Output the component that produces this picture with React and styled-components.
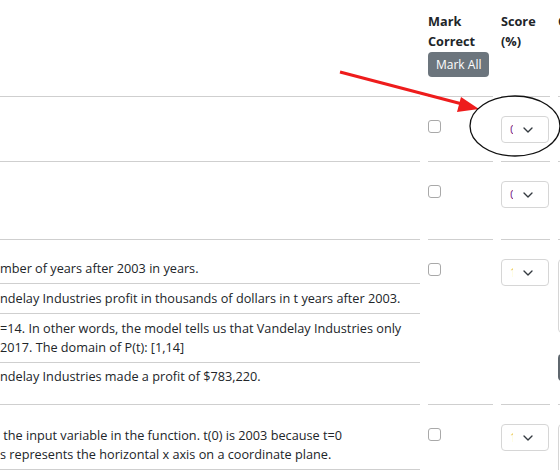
import React from 'react'
import styled, { createGlobalStyle } from 'styled-components'
import { ChevronDown } from 'lucide-react'

const Global = createGlobalStyle`
  html, body {
    margin: 0;
    padding: 0;
    width: 560px;
    height: 470px;
    overflow: hidden;
    background: #fff;
  }
  body {
    font-family: "Open Sans", "Noto Sans", sans-serif;
    font-size: 12.7px;
    color: #212529;
  }
`

const Page = styled.div`
  position: relative;
  width: 760px;
`

const Row = styled.div`
  display: grid;
  grid-template-columns: 420px 65px 49px 200px;
  column-gap: 8px;
`

const Cell = styled.div`
  border-top: ${p => (p.$head ? 'none' : '1px solid #cfcfcf')};
  padding: ${p => (p.$head ? '11px 0 19px' : '19px 0 18px')};
  min-height: ${p => p.$min || 0}px;
  box-sizing: border-box;
`

const HeadText = styled.div`
  font-weight: 700;
  line-height: 20px;
  white-space: nowrap;
`

const MarkAll = styled.button`
  margin-top: 1px;
  height: 25px;
  padding: 0 8px;
  border: none;
  border-radius: 4px;
  background: #6c757d;
  color: #fff;
  font-family: inherit;
  font-size: 12px;
`

const SubList = styled.div`
  margin-top: ${p => p.$offset || 0}px;
`

const SubRow = styled.div`
  padding: ${p => (p.$first ? '0 0 5px' : p.$last ? '4px 0 0' : '5px 0')};
  line-height: 19px;
  border-bottom: ${p => (p.$last ? 'none' : '1px solid #cfcfcf')};
  white-space: pre;
`

const Check = styled.span`
  display: block;
  width: 13px;
  height: 13px;
  margin-top: 4px;
  border: 1px solid #a9a9a9;
  border-radius: 3px;
  box-sizing: border-box;
  background: #fff;
`

const Select = styled.div`
  display: flex;
  align-items: center;
  width: 48px;
  height: 27px;
  padding-left: 8px;
  border: 1px solid #d6d6d6;
  border-radius: 4px;
  box-sizing: border-box;
  gap: 7px;
  color: #343a40;
`

const Value = styled.span`
  display: inline-block;
  width: 3px;
  overflow: hidden;
  font-size: 12px;
  color: ${p => p.$color};
`

const Note = styled.div`
  width: 200px;
  height: 74px;
  border: 1px solid #d6d6d6;
  border-radius: 4px;
  box-sizing: border-box;
`

const Save = styled.div`
  width: 60px;
  height: 27px;
  margin-top: 21px;
  border-radius: 4px;
  background: #5f676e;
`

const Overlay = styled.svg`
  position: absolute;
  left: 0;
  top: 0;
  pointer-events: none;
`

const ScoreBox = ({ v, color }) => (
  <Select>
    <Value $color={color}>{v}</Value>
    <ChevronDown size={16} strokeWidth={2} />
  </Select>
)

export default function App() {
  return (
    <Page>
      <Global />
      <Row>
        <Cell $head />
        <Cell $head>
          <HeadText>Mark</HeadText>
          <HeadText>Correct</HeadText>
          <MarkAll>Mark All</MarkAll>
        </Cell>
        <Cell $head>
          <HeadText>Score</HeadText>
          <HeadText>(%)</HeadText>
        </Cell>
        <Cell $head>
          <HeadText>Comments</HeadText>
        </Cell>
      </Row>

      <Row>
        <Cell />
        <Cell><Check /></Cell>
        <Cell><ScoreBox v="0" color="#7a2d8c" /></Cell>
        <Cell />
      </Row>

      <Row>
        <Cell $min={78} />
        <Cell><Check /></Cell>
        <Cell><ScoreBox v="0" color="#7a2d8c" /></Cell>
        <Cell />
      </Row>

      <Row>
        <Cell>
          <SubList>
            <SubRow $first>mber of years after 2003 in years.</SubRow>
            <SubRow>ndelay Industries profit in thousands of dollars in t years after 2003.</SubRow>
            <SubRow>{'=14. In other words, the model tells us that Vandelay Industries only\n2017. The domain of P(t): [1,14]'}</SubRow>
            <SubRow $last>ndelay Industries made a profit of $783,220.</SubRow>
          </SubList>
        </Cell>
        <Cell><Check /></Cell>
        <Cell><ScoreBox v="1" color="#e8c35a" /></Cell>
        <Cell>
          <Note />
          <Save />
        </Cell>
      </Row>

      <Row>
        <Cell>
          <SubList $offset={2}>
            <SubRow $first>{' the input variable in the function. t(0) is 2003 because t=0\ns represents the horizontal x axis on a coordinate plane.'}</SubRow>
            <SubRow $last>t(14) is 2017.</SubRow>
          </SubList>
        </Cell>
        <Cell><Check /></Cell>
        <Cell><ScoreBox v="1" color="#e8c35a" /></Cell>
        <Cell>
          <Note />
        </Cell>
      </Row>

      <Overlay width="560" height="470" viewBox="0 0 560 470">
        <line x1="340" y1="72" x2="466" y2="105" stroke="#ee1c1c" strokeWidth="3" />
        <polygon points="479,109 461,97 457,112" fill="#ee1c1c" />
        <ellipse cx="515" cy="126" rx="45" ry="30" fill="none" stroke="#111" strokeWidth="1.3" />
      </Overlay>
    </Page>
  )
}
